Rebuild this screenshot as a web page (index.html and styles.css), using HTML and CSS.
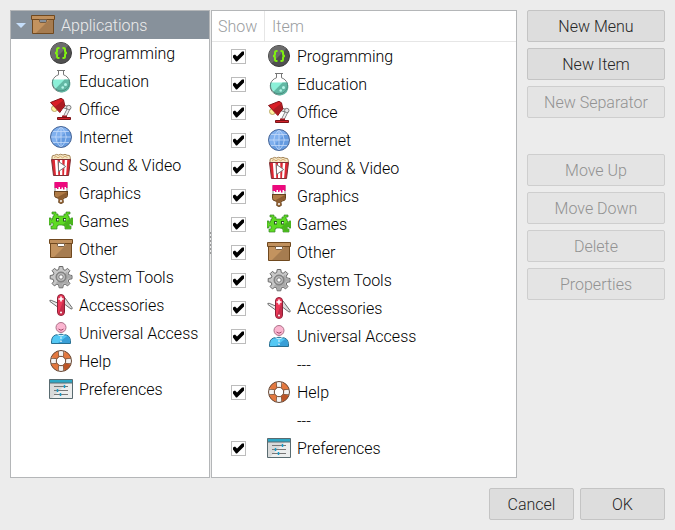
FILE: index.html
```html
<!DOCTYPE html>
<html lang="en">
<head>
<meta charset="utf-8">
<meta name="viewport" content="width=device-width, initial-scale=1">
<title>Main Menu Editor</title>
<link rel="stylesheet" href="styles.css">
</head>
<body>
<svg class="sprite" aria-hidden="true">
  <symbol id="i-programming" viewBox="0 0 24 24">
    <circle cx="12" cy="12" r="10.500" fill="#505050" stroke="#3c3c3c"/>
    <path d="M4.600 19.400A10.300 10.300 0 0 1 19.400 4.600z" fill="#6c6c6c"/>
    <path d="M10.500 7H9.500Q8 7 8 8.500v1.500q0 2-2 2 2 0 2 2v1.500Q8 17 9.500 17h1M13.500 7h1Q16 7 16 8.500v1.500q0 2 2 2-2 0-2 2v1.500q0 1.500-1.500 1.500h-1" fill="none" stroke="#80f010" stroke-width="2"/>
  </symbol>
  <symbol id="i-education" viewBox="0 0 24 24">
    <path d="M9.500 1.500h5v4.300a8.700 8.700 0 1 1-5 0z" fill="#fff" stroke="#777"/>
    <path d="M4.200 10.500h15.600a8.200 8.200 0 1 1-15.600 0z" fill="#8cf0d8"/>
    <path d="M19.800 10.500A8.200 8.200 0 0 1 6.200 19.900l9.400-9.400z" fill="#62b8a4"/>
    <path d="M4 10.500a8.500 8.500 0 1 0 16 0" fill="none" stroke="#4c8d80"/>
    <path d="M8 1.500h8" stroke="#777"/>
    <circle cx="16.500" cy="15.500" r="1.500" fill="#b5f5e8"/>
    <circle cx="13.700" cy="18.500" r="1.300" fill="#b5f5e8"/>
  </symbol>
  <symbol id="i-office" viewBox="0 0 24 24">
    <circle cx="5.500" cy="11.500" r="3" fill="#fff3a0" stroke="#b9a967"/>
    <path d="M14.500 9.500 20 11l-4.500 9" fill="none" stroke="#777" stroke-width="3.400" stroke-linejoin="round"/>
    <path d="M14.500 9.500 20 11l-4.500 9" fill="none" stroke="#eee" stroke-width="1.800" stroke-linejoin="round"/>
    <circle cx="19.800" cy="10.500" r="2.200" fill="#e8e8e8" stroke="#666" stroke-width=".8"/>
    <path d="M1.500 5.500 12 1.300l2.500 1.500 1.300 6-2.700 3.400-2.300 3.300z" fill="#d91e25" stroke="#86151a"/>
    <path d="m6 9.800 8-6.200 1.200 5-2.500 3.300-2 2.700z" fill="#ab1c22"/>
    <path d="M13 18.500h5v2h-5z" fill="#a31920"/>
    <path d="M8.500 20.500h13v2h-13z" fill="#d3222a" stroke="#791317"/>
  </symbol>
  <symbol id="i-internet" viewBox="0 0 24 24">
    <circle cx="12" cy="12" r="10.500" fill="#659be0"/>
    <path d="M4.600 19.400A10.400 10.400 0 0 1 19.400 4.600z" fill="#80b0ee"/>
    <path d="M12 1.500v21M1.500 12h21M3.500 6.500h17M3.500 17.500h17M12 1.500q-10.500 10.500 0 21M12 1.500q10.500 10.500 0 21" fill="none" stroke="#c4dafa" stroke-width=".8"/>
    <circle cx="12" cy="12" r="10.500" fill="none" stroke="#4a6797"/>
  </symbol>
  <symbol id="i-video" viewBox="0 0 24 24">
    <path d="M3 7.500V4q0-2 2.500-1.700Q7.500.6 9.500 2q2-1.500 4.500 0 2-1.500 4 .2Q21.500 1.700 21.300 4.500v3z" fill="#f5e7c4" stroke="#a48458"/>
    <path d="m5 4.500 2-1 2 1.300 2.500-1.500 2 1.500 2.500-1.500 2.500 1.200" fill="none" stroke="#d5ab70"/>
    <path d="M2.500 6.500h19l-2 16h-15z" fill="#fff"/>
    <path d="M2.500 6.500h3.300l1.200 16H4.500zM8.500 6.500H11v16H9.300zM13.300 6.500h2.500l-.8 16h-1.700zM18.300 6.500h3.200l-2 16h-2.400z" fill="#dc2833"/>
    <path d="M2.500 6.500h19l-2 16h-15z" fill="none" stroke="#7b3035"/>
    <path d="m9.500 8.500 7.200 5-7.200 5z" fill="#fff" stroke="#777"/>
  </symbol>
  <symbol id="i-graphics" viewBox="0 0 24 24">
    <path d="M5.500 10.500h13v4q0 2-3 2.500-1.800.5-1.500 1.500l.3 3q-2.300 2-4.600 0l.3-3q.3-1-1.500-1.500-3-.5-3-2.500z" fill="#b07b46" stroke="#654321"/>
    <path d="M18 11v3.300q0 1.800-3 2.200-1.800.5-1.500 1.500l.3 3.200-1.500.8L8 16.500z" fill="#8c5d31"/>
    <path d="M6 1.500h12v9H6z" fill="#fff" stroke="#888"/>
    <path d="M5.500 1h13v6H17V6h-1.500v2.500H14V6.500h-1.500V8H11V6H9.500v2H8V7H5.500z" fill="#ed087d"/>
    <path d="M5 10.500h14" stroke="#654321"/>
    <circle cx="12" cy="20" r="1" fill="#fff"/>
  </symbol>
  <symbol id="i-games" viewBox="0 0 24 24">
    <path d="M3 3h4v2h2v2h6V5h2V3h4v2h-2v2h1v2h1v2h1V9h2v7h-2v-2h-2v3h2v3h-6v-3h-1v-1H9v1H8v3H2v-3h2v-3H2v2H0V9h2v2h1V9h1V7h1V5H3z" fill="#5edb23" stroke="#37842a" stroke-width=".7"/>
    <path d="M24 9v6h-3.500v2.500h1.300v2H16.500v-3H13L19.500 10.500h3V9z" fill="#49b51d"/>
    <path d="M7 9h3v3.500H7zM14 9h3v3.500h-3z" fill="#245b1c"/>
    <path d="M8 10h1.500v1.500H8zM15 10h1.500v1.500H15z" fill="#fff"/>
  </symbol>
  <symbol id="i-box" viewBox="0 0 24 24">
    <path d="M1.500 6.500h21v14h-21z" fill="#c3935f"/>
    <path d="M22 7v13H5L18 7z" fill="#a67c50"/>
    <path d="M1.500 6.500h21v14h-21z" fill="none" stroke="#70491f"/>
    <path d="M.5 2.500h23v4H.5z" fill="#c0905d" stroke="#70491f"/>
    <path class="slot" d="M8.500 6.500h7v2l-.7 1H9.200l-.7-1z" stroke="#765d43"/>
  </symbol>
  <symbol id="i-system" viewBox="0 0 24 24">
    <path d="M10.200 1.500h3.600l.5 3 1.800.8 2.500-1.900 2.300 2.300-1.700 2.500.8 1.800 3 .5v3.300l-3 .5-.8 1.800 1.700 2.500-2.300 2.300-2.500-1.800-1.800.8-.5 2.900h-3.600l-.5-2.900-1.800-.8-2.500 1.800-2.300-2.300 1.800-2.500-.8-1.800-2.900-.5v-3.300l2.900-.5.8-1.800-1.800-2.500 2.300-2.300 2.500 1.900 1.800-.8z" fill="#c7c7c7" stroke="#686868"/>
    <path d="M6.500 18.500 18 6.500l1 3.500 3 .6v2.500l-3 .5-1 2.300 1.700 2.300-1.600 1.600-2.400-1.800-2.200 1-.5 2.900h-2.500L10 19z" fill="#aaa"/>
    <circle cx="12" cy="12" r="5" fill="#8c8c8c" stroke="#7d7d7d"/>
    <circle cx="12" cy="12" r="3.800" fill="#c4c4c4"/>
    <circle cx="12" cy="12" r="2.200" fill="#fff" stroke="#777"/>
  </symbol>
  <symbol id="i-accessories" viewBox="0 0 24 24">
    <path d="m10 15-9-6.500q-1-1.600 1.200-1.200L11 11z" fill="#eee" stroke="#6e6e6e"/>
    <path d="M13 3.500q2-.3 3 1.500l7 9.500q.8 1.800-1 1.500L14 10z" fill="#ddd" stroke="#6e6e6e"/>
    <path d="M12 1.500q3.500 0 3.500 3.500v14q0 3.500-3.500 3.500T8.500 19V5q0-3.500 3.500-3.500z" fill="#ed3858" stroke="#8b2036"/>
    <path d="M15 6v13q0 3-3 3-2 0-2.700-1.300z" fill="#c52d4a"/>
    <path d="M12 3.500v5M9.500 6h5" stroke="#fff" stroke-width="1.600"/>
    <circle cx="12" cy="19.500" r="1" fill="#fff"/>
  </symbol>
  <symbol id="i-access" viewBox="0 0 24 24">
    <path d="M2.500 22.500q-.5-7 4-8.500 5.500-1.500 11 0 4.500 1.500 4 8.500z" fill="#54c8f4" stroke="#286f91"/>
    <path d="M9 22 18.500 14.800q2.700 2 2.500 7.200z" fill="#399fd7"/>
    <circle cx="12" cy="6.500" r="5" fill="#fbb5d0" stroke="#ad7289"/>
    <path d="M9.500 8q2.500 2.500 5 0" fill="none" stroke="#a34a6a"/>
    <path d="m8.500 13.500 3.500 1.500 3.500-1.500" fill="none" stroke="#e7faff"/>
    <circle cx="12" cy="17" r=".8" fill="#fff"/><circle cx="12" cy="20.300" r=".8" fill="#fff"/>
  </symbol>
  <symbol id="i-help" viewBox="0 0 24 24">
    <circle cx="12" cy="12" r="7.500" fill="none" stroke="#f4f4f4" stroke-width="6"/>
    <circle cx="12" cy="12" r="7.500" fill="none" stroke="#e3783f" stroke-width="6" stroke-dasharray="6.780 5.001" stroke-dashoffset="-2.500"/>
    <path d="M21.500 15.800A10.300 10.300 0 0 1 15.800 21.500l-1.600-4.700 2.600-2.600z" fill="#bc5426"/>
    <circle cx="12" cy="12" r="10.500" fill="none" stroke="#694936"/>
    <circle cx="12" cy="12" r="4.700" fill="none" stroke="#694936"/>
    <path d="M9.500 2v5M14.500 2v5M9.500 17v5M14.500 17v5M2 9.500h5M2 14.500h5M17 9.500h5M17 14.500h5" stroke="#7b5944" stroke-width=".8"/>
  </symbol>
  <symbol id="i-preferences" viewBox="0 0 24 24">
    <path d="M.5 2.500h23v19H.5z" fill="#d8dada"/>
    <path d="M23 6v15H3L18 6z" fill="#eceeee"/>
    <path d="M.5 2.500h23v3.500H.5z" fill="#2da7c5"/>
    <path d="M.5 2.500h23v19H.5zM.5 6h23" fill="none" stroke="#596b70"/>
    <path d="M5 9.500h14M5 13.500h14M5 17.500h14" stroke="#777"/>
    <path d="M15.500 8v3M8.500 12v3M11.500 16v3" stroke="#169cc9" stroke-width="1.500"/>
  </symbol>
</svg>

<main class="editor">
  <div class="panes">
    <nav class="pane tree" aria-label="Menus">
      <button class="tree-root" type="button" aria-expanded="true"><span class="arrow"></span><svg class="icon"><use href="#i-box"/></svg><span class="name">Applications</span></button>
      <ul class="tree-list">
        <li><svg class="icon"><use href="#i-programming"/></svg><span class="name">Programming</span></li>
        <li><svg class="icon"><use href="#i-education"/></svg><span class="name">Education</span></li>
        <li><svg class="icon"><use href="#i-office"/></svg><span class="name">Office</span></li>
        <li><svg class="icon"><use href="#i-internet"/></svg><span class="name">Internet</span></li>
        <li><svg class="icon"><use href="#i-video"/></svg><span class="name">Sound &amp; Video</span></li>
        <li><svg class="icon"><use href="#i-graphics"/></svg><span class="name">Graphics</span></li>
        <li><svg class="icon"><use href="#i-games"/></svg><span class="name">Games</span></li>
        <li><svg class="icon"><use href="#i-box"/></svg><span class="name">Other</span></li>
        <li><svg class="icon"><use href="#i-system"/></svg><span class="name">System Tools</span></li>
        <li><svg class="icon"><use href="#i-accessories"/></svg><span class="name">Accessories</span></li>
        <li><svg class="icon"><use href="#i-access"/></svg><span class="name">Universal Access</span></li>
        <li><svg class="icon"><use href="#i-help"/></svg><span class="name">Help</span></li>
        <li><svg class="icon"><use href="#i-preferences"/></svg><span class="name">Preferences</span></li>
      </ul>
    </nav>
    <div class="splitter"></div>
    <div class="pane items">
      <table>
        <thead><tr><th class="show" scope="col">Show</th><th scope="col">Item</th></tr></thead>
        <tbody>
          <tr><td class="show"><input type="checkbox" id="c1" checked></td><td><label for="c1"><svg class="icon"><use href="#i-programming"/></svg><span class="name">Programming</span></label></td></tr>
          <tr><td class="show"><input type="checkbox" id="c2" checked></td><td><label for="c2"><svg class="icon"><use href="#i-education"/></svg><span class="name">Education</span></label></td></tr>
          <tr><td class="show"><input type="checkbox" id="c3" checked></td><td><label for="c3"><svg class="icon"><use href="#i-office"/></svg><span class="name">Office</span></label></td></tr>
          <tr><td class="show"><input type="checkbox" id="c4" checked></td><td><label for="c4"><svg class="icon"><use href="#i-internet"/></svg><span class="name">Internet</span></label></td></tr>
          <tr><td class="show"><input type="checkbox" id="c5" checked></td><td><label for="c5"><svg class="icon"><use href="#i-video"/></svg><span class="name">Sound &amp; Video</span></label></td></tr>
          <tr><td class="show"><input type="checkbox" id="c6" checked></td><td><label for="c6"><svg class="icon"><use href="#i-graphics"/></svg><span class="name">Graphics</span></label></td></tr>
          <tr><td class="show"><input type="checkbox" id="c7" checked></td><td><label for="c7"><svg class="icon"><use href="#i-games"/></svg><span class="name">Games</span></label></td></tr>
          <tr><td class="show"><input type="checkbox" id="c8" checked></td><td><label for="c8"><svg class="icon"><use href="#i-box"/></svg><span class="name">Other</span></label></td></tr>
          <tr><td class="show"><input type="checkbox" id="c9" checked></td><td><label for="c9"><svg class="icon"><use href="#i-system"/></svg><span class="name">System Tools</span></label></td></tr>
          <tr><td class="show"><input type="checkbox" id="c10" checked></td><td><label for="c10"><svg class="icon"><use href="#i-accessories"/></svg><span class="name">Accessories</span></label></td></tr>
          <tr><td class="show"><input type="checkbox" id="c11" checked></td><td><label for="c11"><svg class="icon"><use href="#i-access"/></svg><span class="name">Universal Access</span></label></td></tr>
          <tr><td class="show"></td><td class="separator">---</td></tr>
          <tr><td class="show"><input type="checkbox" id="c12" checked></td><td><label for="c12"><svg class="icon"><use href="#i-help"/></svg><span class="name">Help</span></label></td></tr>
          <tr><td class="show"></td><td class="separator">---</td></tr>
          <tr><td class="show"><input type="checkbox" id="c13" checked></td><td><label for="c13"><svg class="icon"><use href="#i-preferences"/></svg><span class="name">Preferences</span></label></td></tr>
        </tbody>
      </table>
    </div>
    <div class="actions">
      <div class="group">
        <button class="btn" type="button">New Menu</button>
        <button class="btn" type="button">New Item</button>
        <button class="btn" type="button" disabled>New Separator</button>
      </div>
      <div class="group">
        <button class="btn" type="button" disabled>Move Up</button>
        <button class="btn" type="button" disabled>Move Down</button>
        <button class="btn" type="button" disabled>Delete</button>
        <button class="btn" type="button" disabled>Properties</button>
      </div>
    </div>
  </div>
  <footer class="footer">
    <button class="btn" type="button">Cancel</button>
    <button class="btn" type="button">OK</button>
  </footer>
</main>
</body>
</html>
```
FILE: styles.css
```css
* { box-sizing: border-box; }

body {
  margin: 0;
  background: #ececec;
  color: #000;
  font: 300 16px/20px Roboto, "Liberation Sans", sans-serif;
}

button { font: inherit; color: inherit; }

.sprite { position: absolute; width: 0; height: 0; }

.editor {
  display: flex;
  flex-direction: column;
  gap: 10px;
  min-height: 100vh;
  padding: 10px;
}

.panes { display: flex; flex: 1; }

.pane { background: #fff; border: 1px solid #b4b6b8; }

.icon { flex: none; width: 24px; height: 24px; }
.name { padding-top: 2px; }
.slot { fill: var(--slot, #fff); }

.tree { width: 200px; }

.tree-root {
  --slot: #87919b;
  display: flex;
  align-items: center;
  gap: 6px;
  width: 100%;
  height: 28px;
  padding: 0 5px;
  border: 0;
  background: #87919b;
  color: #ececec;
}

.arrow {
  margin-right: -1px;
  border: 5px solid transparent;
  border-top-color: #c5defa;
  border-bottom: 0;
}

.tree-list { margin: 0; padding: 0; list-style: none; }

.tree-list li,
.items label {
  display: flex;
  align-items: center;
  gap: 6px;
  height: 28px;
}

.tree-list li { padding-left: 38px; }

.splitter {
  width: 1px;
  align-self: center;
  height: 24px;
  background: repeating-linear-gradient(#999 0 2px, #ececec 2px 4px);
}

.items { flex: 1; }

table { width: 100%; border-collapse: separate; border-spacing: 0; }

th {
  height: 31px;
  padding: 2px 7px 0;
  border-bottom: 1px solid #e6e6e6;
  color: #9a9da0;
  font-weight: 300;
  text-align: left;
}

td { height: 28px; padding: 0 2px; }
.show { width: 53px; }
th.show { padding: 2px 6px 0; border-right: 1px solid #e6e6e6; }
td.show { text-align: center; }
td.separator { padding: 4px 2px 0 32px; }

input[type="checkbox"] {
  appearance: none;
  display: block;
  width: 15px;
  height: 15px;
  margin: 0 auto;
  border: 1px solid #bcbcbc;
  background: #fff;
}

input[type="checkbox"]:checked::before {
  content: "";
  display: block;
  width: 13px;
  height: 13px;
  background: #000;
  clip-path: polygon(1px 6px, 3px 5px, 5px 7px, 10px 2px, 12px 2px, 12px 5px, 5px 12px, 4px 12px, 1px 8px);
}

.actions { width: 138px; margin-left: 10px; }
.group { display: flex; flex-direction: column; gap: 6px; }
.group + .group { margin-top: 36px; }

.btn {
  height: 32px;
  padding: 2px 8px 0;
  border: 1px solid #c4c4c4;
  border-radius: 2px;
  background: #dddddd;
  color: #262626;
}

.btn:disabled { border-color: #cecece; background: #e4e4e4; color: #929292; }

.footer { display: flex; justify-content: flex-end; gap: 6px; }
.footer .btn { width: 85px; }
```
